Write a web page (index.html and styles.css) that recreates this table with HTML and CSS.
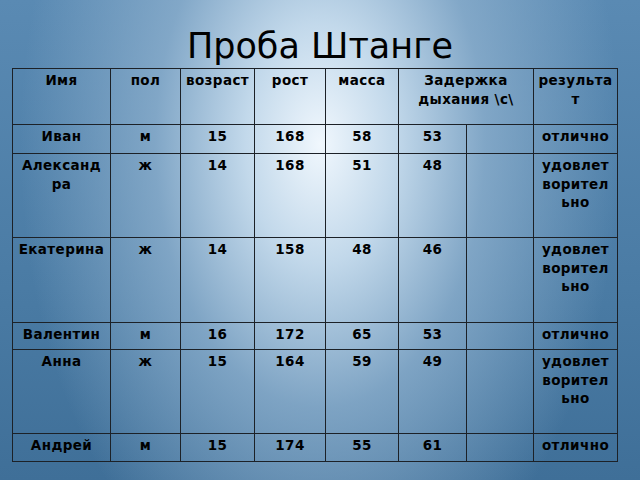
FILE: index.html
```html
<!DOCTYPE html>
<html lang="ru">
<head>
<meta charset="utf-8">
<title>Проба Штанге</title>
<link rel="stylesheet" href="styles.css">
</head>
<body>
<div class="slide">
  <h1 class="title">Проба Штанге</h1>
  <table class="data">
    <colgroup>
      <col class="c1"><col class="c2"><col class="c3"><col class="c4">
      <col class="c5"><col class="c6"><col class="c7"><col class="c8">
    </colgroup>
    <tr class="r-head">
      <td class="name">Имя</td><td>пол</td><td>возраст</td><td>рост</td><td>масса</td>
      <td colspan="2">Задержка дыхания \с\</td><td class="res">результат</td>
    </tr>
    <tr class="r-short">
      <td class="name">Иван</td><td>м</td><td>15</td><td>168</td><td>58</td><td>53</td><td></td><td class="res">отлично</td>
    </tr>
    <tr class="r-tall">
      <td class="name">Александра</td><td>ж</td><td>14</td><td>168</td><td>51</td><td>48</td><td></td><td class="res">удовлетворительно</td>
    </tr>
    <tr class="r-tall2">
      <td class="name">Екатерина</td><td>ж</td><td>14</td><td>158</td><td>48</td><td>46</td><td></td><td class="res">удовлетворительно</td>
    </tr>
    <tr class="r-short2">
      <td class="name">Валентин</td><td>м</td><td>16</td><td>172</td><td>65</td><td>53</td><td></td><td class="res">отлично</td>
    </tr>
    <tr class="r-tall">
      <td class="name">Анна</td><td>ж</td><td>15</td><td>164</td><td>59</td><td>49</td><td></td><td class="res">удовлетворительно</td>
    </tr>
    <tr class="r-last">
      <td class="name">Андрей</td><td>м</td><td>15</td><td>174</td><td>55</td><td>61</td><td></td><td class="res">отлично</td>
    </tr>
  </table>
</div>
</body>
</html>
```

FILE: styles.css
```css
html, body {
  margin: 0;
  padding: 0;
}
body {
  width: 640px;
  height: 480px;
  overflow: hidden;
  background: #3f6f98;
}
.slide {
  width: 640px;
  height: 480px;
  box-sizing: border-box;
  padding-top: 26px;
  background:
    radial-gradient(ellipse 300px 480px at 50% 30%, rgba(240,247,253,1) 0%, rgba(200,221,238,0.95) 25%, rgba(140,175,205,0.8) 55%, rgba(92,137,176,0) 100%),
    linear-gradient(180deg, #5a8ab3 0%, #4a7ba4 60%, #3f6f98 100%);
}
.title {
  margin: 0 0 2px 0;
  height: 40px;
  font-family: "DejaVu Sans", sans-serif;
  font-weight: normal;
  font-size: 35px;
  line-height: 40px;
  text-align: center;
  color: #000;
}
.data {
  margin-left: 12px;
  width: 605px;
  table-layout: fixed;
  border-collapse: collapse;
  font-family: "DejaVu Sans", sans-serif;
  font-weight: bold;
  font-size: 13.5px;
  letter-spacing: 0.4px;
  line-height: 18.5px;
  color: #000;
}
.c1 { width: 98px; }
.c2 { width: 70px; }
.c3 { width: 74px; }
.c4 { width: 71px; }
.c5 { width: 73px; }
.c6 { width: 68px; }
.c7 { width: 67px; }
.c8 { width: 84px; }
.data td {
  border: 1.5px solid #1c2127;
  padding: 2px 2px 0 2px;
  vertical-align: top;
  text-align: center;
  overflow-wrap: anywhere;
}
.data td.name {
  padding-left: 5px;
  padding-right: 5px;
}
.data td.res {
  padding-left: 4px;
  padding-right: 4px;
}
.r-head { height: 56px; }
.r-short { height: 29px; }
.r-tall { height: 84px; }
.r-tall2 { height: 85px; }
.r-short2 { height: 27px; }
.r-last { height: 28px; }
```
